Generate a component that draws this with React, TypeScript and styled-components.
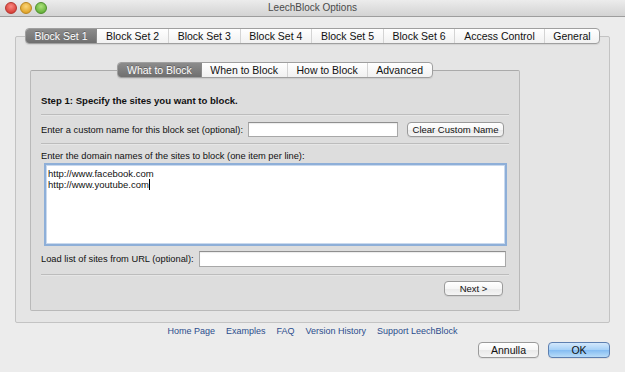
import React from "react";
import styled, { createGlobalStyle } from "styled-components";

const Global = createGlobalStyle`
  html, body {
    margin: 0;
    padding: 0;
    background: #ececec;
    width: 625px;
    height: 372px;
    overflow: hidden;
  }
  * { box-sizing: border-box; }
`;

const Window = styled.div`
  width: 625px;
  height: 372px;
  display: flex;
  flex-direction: column;
  background: #ececec;
  font-family: "Liberation Sans", Arial, sans-serif;
  color: #111;
`;

const TitleBar = styled.div`
  height: 17px;
  flex: none;
  display: grid;
  grid-template-columns: 1fr auto 1fr;
  align-items: center;
  background: linear-gradient(#ececec, #d3d3d3);
  border-bottom: 1px solid #9d9d9d;
`;

const Lights = styled.div`
  display: flex;
  gap: 3px;
  padding-left: 5px;
  padding-bottom: 1px;
`;

const Light = styled.span<{ $c1: string; $c2: string; $b: string }>`
  width: 12px;
  height: 12px;
  border-radius: 50%;
  background: radial-gradient(circle at 50% 35%, ${(p) => p.$c1}, ${(p) => p.$c2} 75%);
  border: 1px solid ${(p) => p.$b};
`;

const Title = styled.div`
  font-size: 10px;
  color: #4a4a4a;
  padding-bottom: 1px;
`;

const Body = styled.div`
  flex: 1;
  display: flex;
  flex-direction: column;
  padding: 11px 15px 0;
`;

const TabView = styled.div`
  display: flex;
  flex-direction: column;
  align-items: center;
`;

const TabStrip = styled.div`
  display: inline-flex;
  position: relative;
  z-index: 1;
  height: 16px;
  border: 1px solid #9f9f9f;
  border-radius: 4px;
  overflow: hidden;
  background: linear-gradient(#ffffff, #f1f1f1);
  box-shadow: 0 1px 1px rgba(0, 0, 0, 0.08);
`;

const Tab = styled.div<{ $active?: boolean }>`
  height: 14px;
  line-height: 14px;
  padding: 0 8.75px;
  font-size: 10.5px;
  white-space: nowrap;
  border-left: 1px solid #d4d4d4;
  color: ${(p) => (p.$active ? "#fff" : "#111")};
  background: ${(p) =>
    p.$active ? "linear-gradient(#8c8c8c, #6f6f6f)" : "transparent"};
  text-shadow: ${(p) => (p.$active ? "0 -1px 0 rgba(0,0,0,0.3)" : "none")};
  &:first-child {
    border-left: none;
  }
  ${(p) => (p.$active ? "& + div { border-left-color: #8a8a8a; }" : "")}
`;

const OuterBox = styled.div`
  align-self: stretch;
  height: 287px;
  margin-top: -8px;
  padding: 25px 0 0 14px;
  background: #e5e5e5;
  border: 1px solid #c3c3c3;
  border-radius: 2px;
`;

const InnerView = styled(TabView)`
  width: 490px;
  align-items: center;
`;

const InnerBox = styled.div`
  align-self: stretch;
  height: 241px;
  margin-top: -8px;
  padding: 24px 10px 0 10px;
  background: #dddddd;
  border: 1px solid #b9b9b9;
  border-top-color: #aaaaaa;
  border-radius: 2px;
  display: flex;
  flex-direction: column;
`;

const Heading = styled.div`
  font-size: 9.6px;
  font-weight: bold;
  line-height: 12px;
`;

const Separator = styled.div<{ $top: number }>`
  height: 1px;
  flex: none;
  margin-top: ${(p) => p.$top}px;
  background: #bcbcbc;
  box-shadow: 0 1px 0 #e6e6e6;
`;

const Row = styled.div<{ $top: number }>`
  display: flex;
  align-items: center;
  margin-top: ${(p) => p.$top}px;
`;

const Label = styled.div<{ $top?: number }>`
  font-size: 9.3px;
  line-height: 12px;
  white-space: nowrap;
  margin-top: ${(p) => p.$top ?? 0}px;
`;

const TextField = styled.div<{ $width?: number; $right?: number; $height?: number }>`
  height: ${(p) => p.$height ?? 15}px;
  background: #fff;
  border: 1px solid #a8a8a8;
  border-top-color: #8f8f8f;
  box-shadow: inset 0 1px 1px rgba(0, 0, 0, 0.08);
  margin-left: 5px;
  margin-right: ${(p) => p.$right ?? 0}px;
  ${(p) => (p.$width ? `width: ${p.$width}px;` : "flex: 1;")}
`;

const Button = styled.button<{ $width: number; $primary?: boolean; $height?: number; $left?: number }>`
  width: ${(p) => p.$width}px;
  height: ${(p) => p.$height ?? 15}px;
  margin-left: ${(p) => p.$left ?? 0}px;
  padding: 0;
  font-family: "Liberation Sans", Arial, sans-serif;
  font-size: ${(p) => (p.$height ? 10.5 : 9.5)}px;
  line-height: 1;
  color: #111;
  border-radius: 4px;
  border: 1px solid ${(p) => (p.$primary ? "#5d7fb0" : "#9a9a9a")};
  background: ${(p) =>
    p.$primary
      ? "linear-gradient(#d3e8fb, #a6d0f7 50%, #84bcf2 51%, #b8dcf8)"
      : "linear-gradient(#ffffff, #f6f6f6 50%, #e9e9e9 51%, #f5f5f5)"};
  box-shadow: 0 1px 0 rgba(0, 0, 0, 0.06);
`;

const SitesArea = styled.div`
  margin: 1px 2px 0 3px;
  height: 83px;
  background: #fff;
  border: 2px solid #8eafd8;
  box-shadow: inset 0 0 0 1px #c9d9ee;
  padding: 3px 2px;
  font-size: 9.5px;
  line-height: 11px;
`;

const Caret = styled.span`
  display: inline-block;
  width: 1px;
  height: 11px;
  background: #000;
  vertical-align: top;
`;

const NextRow = styled.div`
  display: flex;
  justify-content: flex-end;
  margin-top: 6px;
  padding-right: 6px;
`;

const Links = styled.div`
  display: flex;
  justify-content: center;
  gap: 11px;
  margin-top: 2px;
  font-size: 9px;
  line-height: 12px;
`;

const Link = styled.a`
  color: #2b4c8c;
  text-decoration: none;
`;

const Footer = styled.div`
  display: flex;
  justify-content: flex-end;
  gap: 9px;
  margin-top: 5px;
`;

const outerTabs = [
  "Block Set 1",
  "Block Set 2",
  "Block Set 3",
  "Block Set 4",
  "Block Set 5",
  "Block Set 6",
  "Access Control",
  "General",
];
const innerTabs = ["What to Block", "When to Block", "How to Block", "Advanced"];
const links = ["Home Page", "Examples", "FAQ", "Version History", "Support LeechBlock"];

export default function App() {
  return (
    <>
      <Global />
      <Window>
        <TitleBar>
          <Lights>
            <Light $c1="#fb8a82" $c2="#d8413a" $b="#b3362f" />
            <Light $c1="#fbd67a" $c2="#e0a42a" $b="#b98520" />
            <Light $c1="#aee27a" $c2="#66b23c" $b="#4f8e2c" />
          </Lights>
          <Title>LeechBlock Options</Title>
          <div />
        </TitleBar>
        <Body>
          <TabView>
            <TabStrip>
              {outerTabs.map((t, i) => (
                <Tab key={t} $active={i === 0}>
                  {t}
                </Tab>
              ))}
            </TabStrip>
            <OuterBox>
              <InnerView>
                <TabStrip>
                  {innerTabs.map((t, i) => (
                    <Tab key={t} $active={i === 0}>
                      {t}
                    </Tab>
                  ))}
                </TabStrip>
                <InnerBox>
                  <Heading>Step 1: Specify the sites you want to block.</Heading>
                  <Separator $top={7} />
                  <Row $top={7}>
                    <Label>Enter a custom name for this block set (optional):</Label>
                    <TextField $width={150} />
                    <Button $width={97} $left={9}>
                      Clear Custom Name
                    </Button>
                  </Row>
                  <Separator $top={6} />
                  <Label $top={6}>
                    Enter the domain names of the sites to block (one item per line):
                  </Label>
                  <SitesArea>
                    <div>http://www.facebook.com</div>
                    <div>
                      http://www.youtube.com
                      <Caret />
                    </div>
                  </SitesArea>
                  <Row $top={5}>
                    <Label>Load list of sites from URL (optional):</Label>
                    <TextField $right={3} $height={16} />
                  </Row>
                  <Separator $top={7} />
                  <NextRow>
                    <Button $width={59}>Next &gt;</Button>
                  </NextRow>
                </InnerBox>
              </InnerView>
            </OuterBox>
          </TabView>
          <Links>
            {links.map((l) => (
              <Link key={l} href="#">
                {l}
              </Link>
            ))}
          </Links>
          <Footer>
            <Button $width={61} $height={16}>
              Annulla
            </Button>
            <Button $width={62} $height={16} $primary>
              OK
            </Button>
          </Footer>
        </Body>
      </Window>
    </>
  );
}
